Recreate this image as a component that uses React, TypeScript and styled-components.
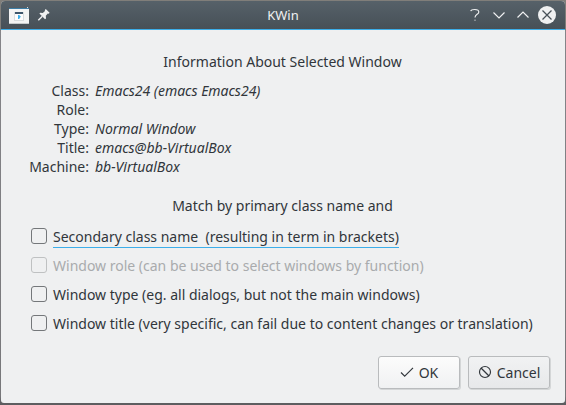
import React from "react";
import styled, { createGlobalStyle } from "styled-components";

const GlobalStyle = createGlobalStyle`
  * { box-sizing: border-box; }
  body { margin: 0; background: #77767a; overflow: hidden; }
`;

const Desktop = styled.div`
  width: 566px;
  height: 405px;
  padding: 1px 1px 2px;
  background: linear-gradient(#807e7a 0, #807e7a 30px, #858589 31px, #77777a 396px, #5d5d60 403px);
`;

const Dialog = styled.main`
  height: 402px;
  display: flex;
  flex-direction: column;
  border-radius: 4px 4px 3px 3px;
  overflow: hidden;
  background: #eff0f1;
  color: #31363b;
  font: 14px/19px "Noto Sans", sans-serif;
  white-space: pre;
`;

const TitleBar = styled.header`
  height: 29px;
  flex: none;
  display: grid;
  grid-template-columns: 100px 1fr 100px;
  align-items: center;
  border-bottom: 1px solid #3daee9;
  background: linear-gradient(#566169, #475057);
  color: #eff0f1;
`;

const Caption = styled.h1`
  margin: 0;
  font-size: 13px;
  font-weight: 400;
  text-align: center;
`;

const TitleLeft = styled.div`
  display: flex;
  align-items: center;
  gap: 8px;
  padding-left: 8px;
`;

const TitleRight = styled.div`
  display: flex;
  align-items: center;
  justify-content: flex-end;
  gap: 6px;
  padding-right: 9px;
`;

const Glyph = styled.svg`
  display: block;
  flex: none;
`;

const Content = styled.section`
  flex: 1;
  display: flex;
  flex-direction: column;
  padding: 22px 15px 14px 28px;
`;

const Heading = styled.h2<{ $top?: number }>`
  margin: ${(p) => p.$top ?? 0}px 14px 0 0;
  font-size: 14px;
  font-weight: 400;
  text-align: center;
`;

const Details = styled.dl`
  display: grid;
  grid-template-columns: 60px 1fr;
  grid-auto-rows: 19px;
  column-gap: 6px;
  margin: 10px 0 0;
`;

const Term = styled.dt`
  text-align: right;
`;

const Value = styled.dd`
  margin: 0;
  font-style: italic;
`;

const Options = styled.div`
  display: flex;
  flex-direction: column;
  align-items: flex-start;
  gap: 8px;
  margin: 12px 0 0 2px;
`;

const Option = styled.label<{ $disabled?: boolean }>`
  height: 21px;
  display: flex;
  gap: 6px;
  color: ${(p) => (p.$disabled ? "#a9abad" : "#31363b")};
`;

const Box = styled.span<{ $disabled?: boolean }>`
  width: 16px;
  height: 16px;
  margin-top: 1px;
  border: 1px solid ${(p) => (p.$disabled ? "#bfc1c2" : "#74777a")};
  border-radius: 3px;
`;

const OptionText = styled.span<{ $focused?: boolean }>`
  height: 21px;
  border-bottom: 1px solid ${(p) => (p.$focused ? "#3daee9" : "transparent")};
`;

const Actions = styled.footer`
  display: flex;
  justify-content: flex-end;
  gap: 8px;
  margin-top: auto;
`;

const Button = styled.button<{ $primary?: boolean }>`
  width: 82px;
  height: 33px;
  display: flex;
  align-items: center;
  justify-content: center;
  gap: 5px;
  padding: 0;
  border: 1px solid #b9bbbd;
  border-radius: 3px;
  background: ${(p) => (p.$primary ? "linear-gradient(#fcfcfc, #f0f1f2)" : "linear-gradient(#f1f2f3, #e7e8ea)")};
  box-shadow: 1px 1px 0 #d4d6d7;
  color: #31363b;
  font: inherit;
`;

const details = [
  ["Class:", "Emacs24 (emacs Emacs24)"],
  ["Role:", ""],
  ["Type:", "Normal Window"],
  ["Title:", "emacs@bb-VirtualBox"],
  ["Machine:", "bb-VirtualBox"],
];

const options = [
  { text: "Secondary class name  (resulting in term in brackets)", focused: true },
  { text: "Window role (can be used to select windows by function)", disabled: true },
  { text: "Window type (eg. all dialogs, but not the main windows)" },
  { text: "Window title (very specific, can fail due to content changes or translation)" },
];

const AppIcon = () => (
  <Glyph width="20" height="18" viewBox="0 0 20 18">
    <path d="M0 2h20v16H0z" fill="#f3f4f4" />
    <path d="M0 2h20v1H0z" fill="#3c7da5" />
    <path d="M18 1h1v1h-1z" fill="#d7dadb" />
    <path d="M5 6h10v9H5z" fill="#d9dddf" />
    <path d="M6 6h8v2H6z" fill="#3d566b" />
    <path d="M6 8h8v6H6z" fill="#fcfcfc" />
    <path d="M9 9h1.2l1.6 1.5L10.2 13H9z" fill="#3daee9" />
    <path d="M0 17h20v1H0z" fill="#c7cbcc" />
  </Glyph>
);

const PinIcon = () => (
  <Glyph width="14" height="14" viewBox="0 0 14 14">
    <path d="M8.8 1L12.6 4.8 11.8 5.8 10.8 5.6 8.8 7.8 9 10.4 8 11.2 2.4 5.6 3.2 4.7 5.8 4.9 8 2.9 7.8 1.9z" fill="#eff0f1" />
    <path d="M5.3 8.3L1.3 12.2" stroke="#eff0f1" strokeWidth="1.4" />
  </Glyph>
);

export default function App() {
  return (
    <>
      <GlobalStyle />
      <Desktop>
        <Dialog>
          <TitleBar>
            <TitleLeft>
              <AppIcon />
              <PinIcon />
            </TitleLeft>
            <Caption>KWin</Caption>
            <TitleRight>
              <Glyph width="18" height="18" viewBox="0 0 18 18" fill="none" stroke="#eff0f1" strokeWidth="1.15">
                <path d="M4.7 5.2C5 4 6.4 3.5 8.8 3.5c2.5 0 4 .8 4 2.4 0 2.5-3.8 2.2-3.8 5.6" />
                <path d="M8.4 13.5h1.2V15H8.4z" fill="#eff0f1" fillOpacity=".6" stroke="none" />
              </Glyph>
              <Glyph width="18" height="18" viewBox="0 0 18 18" fill="none" stroke="#eff0f1" strokeWidth="1.15">
                <path d="M3.5 6.5L9 12l5.5-5.5" />
              </Glyph>
              <Glyph width="18" height="18" viewBox="0 0 18 18" fill="none" stroke="#eff0f1" strokeWidth="1.15">
                <path d="M3.5 11.5L9 6l5.5 5.5" />
              </Glyph>
              <Glyph width="18" height="18" viewBox="0 0 18 18" fill="none">
                <circle cx="9" cy="9" r="9" fill="#eff0f1" />
                <path d="M4.5 4.5l9 9M13.5 4.5l-9 9" stroke="#475057" strokeWidth="1.25" />
              </Glyph>
            </TitleRight>
          </TitleBar>
          <Content>
            <Heading>Information About Selected Window</Heading>
            <Details>
              {details.map(([term, value]) => (
                <React.Fragment key={term}>
                  <Term>{term}</Term>
                  <Value>{value}</Value>
                </React.Fragment>
              ))}
            </Details>
            <Heading $top={20}>Match by primary class name and</Heading>
            <Options>
              {options.map((o) => (
                <Option key={o.text} $disabled={o.disabled}>
                  <Box $disabled={o.disabled} />
                  <OptionText $focused={o.focused}>{o.text}</OptionText>
                </Option>
              ))}
            </Options>
            <Actions>
              <Button $primary>
                <Glyph width="14" height="15" viewBox="0 0 14 15" fill="none" stroke="#31363b" strokeWidth="1.15">
                  <path d="M1 7.5L4.7 11.2l8.3-8.3" />
                </Glyph>
                OK
              </Button>
              <Button>
                <Glyph width="14" height="15" viewBox="0 0 14 15" fill="none" stroke="#31363b" strokeWidth="1.15">
                  <circle cx="7" cy="7" r="5.5" />
                  <path d="M3 3l8 8" />
                </Glyph>
                Cancel
              </Button>
            </Actions>
          </Content>
        </Dialog>
      </Desktop>
    </>
  );
}
